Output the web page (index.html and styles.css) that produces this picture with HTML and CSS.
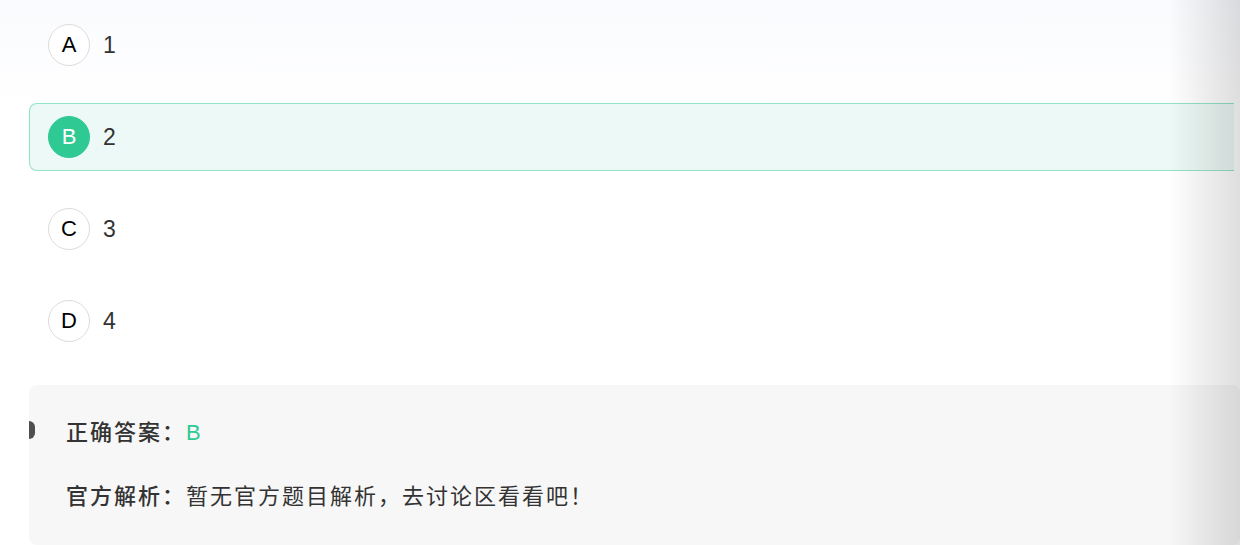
FILE: index.html
```html
<!DOCTYPE html>
<html lang="zh-CN">
<head>
    <meta charset="UTF-8">
    <meta name="viewport" content="width=device-width, initial-scale=1.0">
    <title>题目解析</title>
    <link rel="stylesheet" href="styles.css">
</head>
<body>

<div class="page">
    <div class="options">
        <div class="option">
            <span class="letter">A</span>
            <span class="value">1</span>
        </div>
        <div class="option selected">
            <span class="letter">B</span>
            <span class="value">2</span>
        </div>
        <div class="option">
            <span class="letter">C</span>
            <span class="value">3</span>
        </div>
        <div class="option">
            <span class="letter">D</span>
            <span class="value">4</span>
        </div>
    </div>

    <div class="analysis">
        <span class="marker"></span>
        <div class="line">
            <span class="label">正确答案：</span><span class="answer">B</span>
        </div>
        <div class="line">
            <span class="label">官方解析：</span><span class="text">暂无官方题目解析，去讨论区看看吧！</span>
        </div>
    </div>
</div>

<div class="edge-shadow"></div>

</body>
</html>
```

FILE: styles.css
```css
body {
    margin: 0;
    font-family: "Liberation Sans", "Noto Sans CJK SC", sans-serif;
    background: linear-gradient(#fafbfe 0, #ffffff 110px);
    height: 545px;
    overflow: hidden;
}
.page {
    padding: 11px 0 0 29px;
}
.options {
    display: flex;
    flex-direction: column;
    gap: 24px;
    margin-right: 6px;
}
.option {
    display: flex;
    align-items: center;
    gap: 13px;
    height: 66px;
    padding-left: 18px;
    border: 1px solid transparent;
    border-right: none;
    border-radius: 8px 0 0 8px;
}
.option.selected {
    background-color: #edf9f6;
    border-color: #93e3c7;
}
.letter {
    width: 40px;
    height: 40px;
    border: 1px solid #dcdcdc;
    border-radius: 50%;
    display: flex;
    align-items: center;
    justify-content: center;
    font-size: 22px;
    color: #000;
    background-color: #fff;
}
.selected .letter {
    background-color: #2fc994;
    border-color: #2fc994;
    color: #fff;
}
.value {
    font-size: 23px;
    color: #333;
}
.analysis {
    position: relative;
    margin-top: 30px;
    height: 160px;
    box-sizing: border-box;
    background-color: #f7f7f7;
    border-radius: 8px;
    padding: 25px 0 0 37px;
    display: flex;
    flex-direction: column;
    gap: 21px;
    overflow: hidden;
}
.marker {
    position: absolute;
    left: 0;
    top: 36px;
    width: 6px;
    height: 18px;
    background-color: #4f4f4f;
    border-radius: 0 8px 8px 0;
}
.line {
    line-height: 40px;
    font-size: 22px;
    color: #333;
    font-family: "Noto Sans CJK SC", "Liberation Sans", sans-serif;
    letter-spacing: 2px;
}
.label {
    font-weight: 500;
}
.answer {
    font-family: "Liberation Sans", sans-serif;
    color: #2fc994;
}
.edge-shadow {
    position: fixed;
    top: 0;
    right: 0;
    width: 72px;
    height: 100%;
    background: linear-gradient(to right, rgba(0, 0, 0, 0), rgba(0, 0, 0, 0.13));
    pointer-events: none;
}
```
